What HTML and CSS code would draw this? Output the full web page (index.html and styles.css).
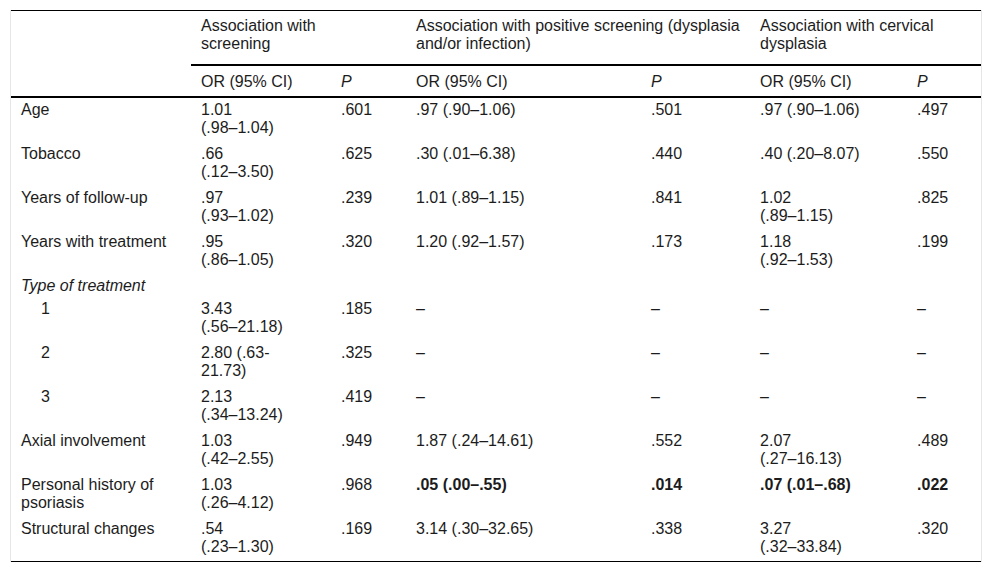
FILE: index.html
```html
<!DOCTYPE html>
<html lang="en">
<head>
<meta charset="utf-8">
<title>Table</title>
<link rel="stylesheet" href="styles.css">
</head>
<body>
<div class="frame">
<table class="data">
  <colgroup>
    <col class="c0"><col class="c1"><col class="c2"><col class="c3"><col class="c4"><col class="c5"><col class="c6">
  </colgroup>
  <thead>
    <tr class="h1">
      <th rowspan="2" class="blank"></th>
      <th colspan="2" class="g1">Association with screening</th>
      <th colspan="2">Association with positive screening (dysplasia and/or infection)</th>
      <th colspan="2">Association with cervical dysplasia</th>
    </tr>
    <tr class="h2">
      <th>OR (95% CI)</th><th><i>P</i></th>
      <th>OR (95% CI)</th><th><i>P</i></th>
      <th>OR (95% CI)</th><th><i>P</i></th>
    </tr>
  </thead>
  <tbody>
    <tr><td>Age</td><td>1.01 <span class="nw">(.98–1.04)</span></td><td>.601</td><td>.97 <span class="nw">(.90–1.06)</span></td><td>.501</td><td>.97 <span class="nw">(.90–1.06)</span></td><td>.497</td></tr>
    <tr><td>Tobacco</td><td>.66 <span class="nw">(.12–3.50)</span></td><td>.625</td><td>.30 <span class="nw">(.01–6.38)</span></td><td>.440</td><td>.40 <span class="nw">(.20–8.07)</span></td><td>.550</td></tr>
    <tr><td>Years of follow-up</td><td>.97 <span class="nw">(.93–1.02)</span></td><td>.239</td><td>1.01 <span class="nw">(.89–1.15)</span></td><td>.841</td><td>1.02 <span class="nw">(.89–1.15)</span></td><td>.825</td></tr>
    <tr><td>Years with treatment</td><td>.95 <span class="nw">(.86–1.05)</span></td><td>.320</td><td>1.20 <span class="nw">(.92–1.57)</span></td><td>.173</td><td>1.18 <span class="nw">(.92–1.53)</span></td><td>.199</td></tr>
    <tr class="single"><td colspan="7"><i>Type of treatment</i></td></tr>
    <tr><td class="ind">1</td><td>3.43 <span class="nw">(.56–21.18)</span></td><td>.185</td><td>–</td><td>–</td><td>–</td><td>–</td></tr>
    <tr><td class="ind">2</td><td>2.80 (.63-21.73)</td><td>.325</td><td>–</td><td>–</td><td>–</td><td>–</td></tr>
    <tr><td class="ind">3</td><td>2.13 <span class="nw">(.34–13.24)</span></td><td>.419</td><td>–</td><td>–</td><td>–</td><td>–</td></tr>
    <tr><td>Axial involvement</td><td>1.03 <span class="nw">(.42–2.55)</span></td><td>.949</td><td>1.87 <span class="nw">(.24–14.61)</span></td><td>.552</td><td>2.07 <span class="nw">(.27–16.13)</span></td><td>.489</td></tr>
    <tr><td>Personal history of psoriasis</td><td>1.03 <span class="nw">(.26–4.12)</span></td><td>.968</td><td><b>.05 <span class="nw">(.00–.55)</span></b></td><td><b>.014</b></td><td><b>.07 <span class="nw">(.01–.68)</span></b></td><td><b>.022</b></td></tr>
    <tr><td>Structural changes</td><td>.54 <span class="nw">(.23–1.30)</span></td><td>.169</td><td>3.14 <span class="nw">(.30–32.65)</span></td><td>.338</td><td>3.27 <span class="nw">(.32–33.84)</span></td><td>.320</td></tr>
  </tbody>
</table>
</div>
</body>
</html>
```

FILE: styles.css
```css
html, body {
  margin: 0;
  padding: 0;
  background: #ffffff;
}
body {
  font-family: "Liberation Sans", Arial, sans-serif;
  font-size: 16px;
  color: #1c1c1c;
}
.frame {
  margin: 10px 0 0 10px;
  width: 970px;
  border-left: 1px solid #e6e6e6;
  border-right: 1px solid #e6e6e6;
}
.data {
  width: 970px;
  border-collapse: collapse;
  table-layout: fixed;
  border-top: 1px solid #000;
  border-bottom: 1px solid #000;
}
.c0 { width: 180px; }
.c1 { width: 140px; }
.c2 { width: 75px; }
.c3 { width: 235px; }
.c4 { width: 109px; }
.c5 { width: 157px; }
.c6 { width: 74px; }
.data th {
  font-weight: normal;
  text-align: left;
  vertical-align: top;
  padding: 6px 10px 11px;
  line-height: 18px;
}
.h1 th { border-bottom: 2px solid #000; }
.h1 th.g1 { padding-right: 60px; }
.h2 th { border-bottom: 2px solid #000; padding: 7px 10px 5px; }
.data td {
  vertical-align: top;
  padding: 3px 10px 5px;
  line-height: 18px;
}
.data tr.single td { padding: 3px 10px 2px; }
.data tbody td:nth-child(2) { padding-right: 35px; }
.data tbody td:nth-child(6) { padding-right: 43px; }
.data td.ind { padding-left: 30px; }
.nw { white-space: nowrap; }
```
